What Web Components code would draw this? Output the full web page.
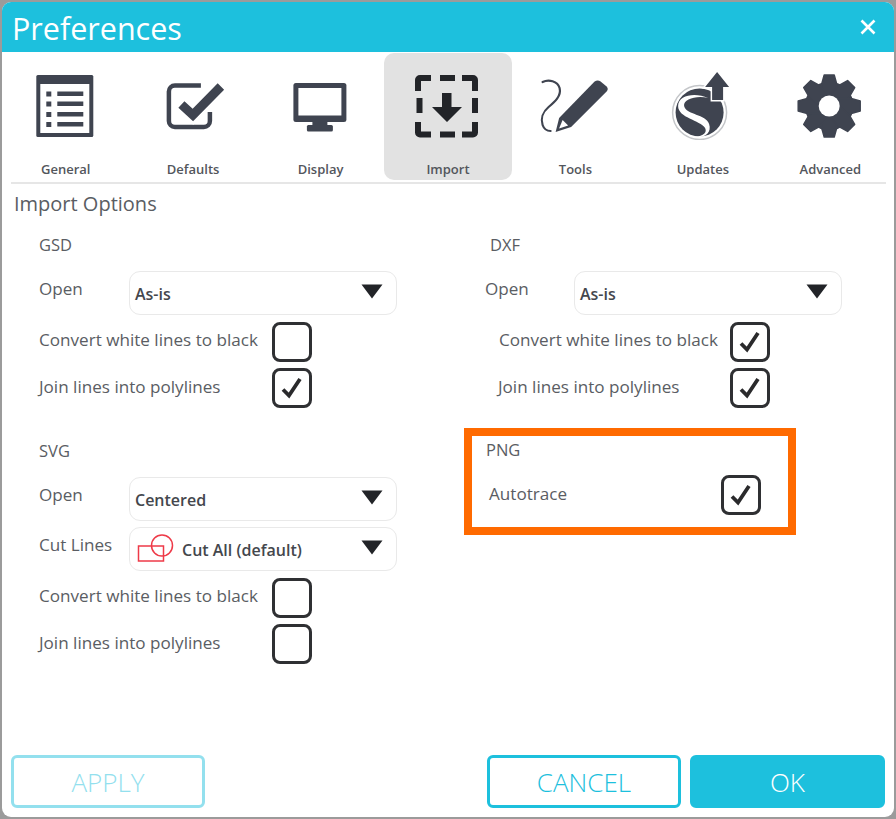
<!DOCTYPE html>
<html>
<head>
<meta charset="utf-8">
<title>Preferences</title>
<style>
  html, body { margin: 0; height: 100%; }
  body { background: #9b9b9b; padding: 2px 2px 2px 2px; box-sizing: border-box; font-family: "Open Sans", "Liberation Sans", sans-serif; color: #555; overflow: hidden; }
</style>
</head>
<body>
<pref-window heading="Preferences">
  <pref-tab slot="tabs" label="General">
    <svg viewBox="25.7 70 80 70" width="80" height="70"><rect x="36" y="75" width="57" height="62" rx="1.5" fill="#3f4450"/><rect x="40" y="84" width="49" height="49" fill="#fff"/><g fill="#3f4450"><rect x="46" y="91.500" width="5" height="5"/><rect x="46" y="101.500" width="5" height="5"/><rect x="46" y="112" width="5" height="5"/><rect x="46" y="122" width="5" height="5"/><rect x="57" y="91.500" width="26" height="4.500"/><rect x="57" y="101.500" width="26" height="4.500"/><rect x="57" y="112" width="26" height="4.500"/><rect x="57" y="122" width="26" height="4.500"/></g></svg>
  </pref-tab>
  <pref-tab slot="tabs" label="Defaults">
    <svg viewBox="153.100 70 80 70" width="80" height="70"><path d="M201 85.500H175a6 6 0 0 0-6 6V121a6 6 0 0 0 6 6h29a6 6 0 0 0 6-6v-9" fill="none" stroke="#3f4450" stroke-width="4.500"/><path d="M181.500 104.500L193 115L221 86.500" fill="none" stroke="#fff" stroke-width="14"/><path d="M181.500 104.500L193 115L221 86.500" fill="none" stroke="#3f4450" stroke-width="9"/></svg>
  </pref-tab>
  <pref-tab slot="tabs" label="Display">
    <svg viewBox="280.600 70 80 70" width="80" height="70"><rect x="293" y="83" width="53" height="39" rx="2.500" fill="#3f4450"/><rect x="298" y="88" width="43" height="27.500" fill="#fff"/><rect x="312" y="121" width="15" height="6" fill="#3f4450"/><rect x="306.500" y="125" width="26" height="6.500" rx="1.500" fill="#3f4450"/></svg>
  </pref-tab>
  <pref-tab slot="tabs" label="Import" active>
    <svg viewBox="408 70 80 70" width="80" height="70"><g fill="none" stroke="#222428" stroke-width="6"><path d="M431 78h-11a2 2 0 0 0-2 2v11"/><path d="M462 78h11a2 2 0 0 1 2 2v11"/><path d="M431 134.500h-11a2 2 0 0 1-2-2v-10.500"/><path d="M462 134.500h11a2 2 0 0 0 2-2v-10.500"/><path d="M440 78h15"/><path d="M440 134.500h15"/><path d="M419.500 98v15"/><path d="M475 98v15"/></g><path d="M442 93h9.500v14H462L447 122L432 107h10z" fill="#222428"/></svg>
  </pref-tab>
  <pref-tab slot="tabs" label="Tools">
    <svg viewBox="535.400 70 80 70" width="80" height="70"><path d="M543 82c6-3 15-1 17 6c2 8-5 14-11 19c-6 5-8 12-6 18c1 3 4 6 8 6" fill="none" stroke="#3f4450" stroke-width="2.200" stroke-linecap="round"/><path d="M595 81.500c2-1.500 4-1.500 6 0l6 5c1.500 1.500 1.500 3.500 0 5L571.500 127L556 132L559.500 118z" fill="#3f4450"/><path d="M563 120L568.500 125.500L559.500 128.500z" fill="#fff"/></svg>
  </pref-tab>
  <pref-tab slot="tabs" label="Updates">
    <svg viewBox="662.900 70 80 70" width="80" height="70"><circle cx="699.500" cy="112.500" r="27" fill="none" stroke="#c4c6c9" stroke-width="1.500"/><circle cx="699.500" cy="112.500" r="24" fill="#3f4450"/><path d="M708 98C695 92 678 95 678 106C678 118 700 120 705 128C708 134 700 137 692 137C704 139 712 133 709 124C706 114 686 115 684 106C683 99 697 95 708 98Z" fill="#fff"/><path d="M717 72L729 87H723V100H712V87H705z" fill="#3f4450" stroke="#fff" stroke-width="3" paint-order="stroke"/></svg>
  </pref-tab>
  <pref-tab slot="tabs" label="Advanced">
    <svg viewBox="790.300 70 80 70" width="80" height="70"><g fill="#3f4450" stroke="#3f4450" stroke-width="1.500" stroke-linejoin="round" transform="translate(829.500 106)"><circle r="23.500"/><path id="tooth" d="M-7.500-22L-5-31H5L7.500-22V22L5 31H-5L-7.500 22z"/><path d="M-7.500-22L-5-31H5L7.500-22V22L5 31H-5L-7.500 22z" transform="rotate(45)"/><path d="M-7.500-22L-5-31H5L7.500-22V22L5 31H-5L-7.500 22z" transform="rotate(90)"/><path d="M-7.500-22L-5-31H5L7.500-22V22L5 31H-5L-7.500 22z" transform="rotate(135)"/><circle r="10.500" fill="#fff" stroke="none"/></g></svg>
  </pref-tab>

  <pref-column>
    <pref-group heading="GSD">
      <pref-row label="Open" width="90" kind="select"><pref-select value="As-is"></pref-select></pref-row>
      <pref-row label="Convert white lines to black" width="233" kind="check"><pref-check></pref-check></pref-row>
      <pref-row label="Join lines into polylines" width="233" kind="check"><pref-check checked></pref-check></pref-row>
    </pref-group>
    <pref-group heading="SVG" style="margin-top:30.500px">
      <pref-row label="Open" width="90" kind="select"><pref-select value="Centered"></pref-select></pref-row>
      <pref-row label="Cut Lines" width="90" kind="select">
        <pref-select value="Cut All (default)">
          <svg slot="icon" width="40" height="30" viewBox="0 0 40 30"><rect x="1.500" y="12" width="25" height="15" fill="none" stroke="#ee3a48" stroke-width="1.500"/><circle cx="25" cy="11.500" r="10.500" fill="none" stroke="#ee3a48" stroke-width="1.500"/></svg>
        </pref-select>
      </pref-row>
      <pref-row label="Convert white lines to black" width="233" kind="check"><pref-check></pref-check></pref-row>
      <pref-row label="Join lines into polylines" width="233" kind="check"><pref-check></pref-check></pref-row>
    </pref-group>
  </pref-column>

  <pref-column>
    <pref-group heading="DXF" style="--title-indent:26px">
      <pref-row label="Open" width="89" kind="select" style="padding-left:21px"><pref-select value="As-is"></pref-select></pref-row>
      <pref-row label="Convert white lines to black" width="231" kind="check" style="padding-left:35px"><pref-check checked></pref-check></pref-row>
      <pref-row label="Join lines into polylines" width="232" kind="check" style="padding-left:34px"><pref-check checked></pref-check></pref-row>
    </pref-group>
    <pref-highlight style="margin-top:20px">
      <pref-group heading="PNG" style="--title-indent:14px;--title-gap:13px">
        <pref-row label="Autotrace" width="232" kind="check" style="padding-left:17px"><pref-check checked></pref-check></pref-row>
      </pref-group>
    </pref-highlight>
  </pref-column>

  <pref-button slot="actions" kind="disabled" style="margin-right:282px">APPLY</pref-button>
  <pref-button slot="actions" kind="outline" style="margin-right:9px">CANCEL</pref-button>
  <pref-button slot="actions" kind="primary">OK</pref-button>
</pref-window>

<script>
class PrefElement extends HTMLElement {
  constructor(template) {
    super()
    const _template = document.createElement('template')
    _template.innerHTML = template
    this.attachShadow({ mode: 'open' })
    this.shadowRoot.appendChild(_template.content.cloneNode(true))
  }
}

class PrefWindow extends PrefElement {
  constructor() {
    super(`
      <style>
      :host { display: flex; flex-direction: column; height: 815px; background: #fff; border-radius: 9px; overflow: hidden; }
      header { display: flex; justify-content: space-between; height: 50px; background: #1dc0dd; color: #fff; flex: none; }
      h1 { margin: 0; padding-left: 10px; font-size: 30.500px; font-weight: 400; line-height: 52px; }
      svg { margin: 17px 18px 0 0; }
      .tabs { display: grid; grid-template-columns: repeat(7, 1fr); margin-top: 1px; height: 127px; flex: none; }
      hr { margin: 2px 8px 0 9px; border: 0; height: 1.500px; background: #e6e6e6; flex: none; }
      h2 { margin: 7px 0 0 12px; font-size: 20px; font-weight: 400; line-height: 26px; color: #5a5d63; flex: none; }
      .body { display: grid; grid-template-columns: 425px 1fr; padding: 16.500px 0 0 37px; flex: none; }
      .actions { display: flex; margin-top: auto; padding: 0 9px 9px; }
      </style>
      <header><h1></h1><svg width="16" height="16" viewBox="0 0 16 16"><path d="M1.500 1.500L14.500 14.500M14.500 1.500L1.500 14.500" stroke="#fff" stroke-width="2.600"/></svg></header>
      <div class="tabs"><slot name="tabs"></slot></div>
      <hr>
      <h2>Import Options</h2>
      <div class="body"><slot></slot></div>
      <div class="actions"><slot name="actions"></slot></div>
    `)
  }
  connectedCallback() {
    this.shadowRoot.querySelector('h1').textContent = this.getAttribute('heading')
  }
}

class PrefTab extends PrefElement {
  constructor() {
    super(`
      <style>
      :host { display: flex; flex-direction: column; align-items: center; border-radius: 10px; padding-top: 17px; box-sizing: border-box; height: 127px; }
      :host([active]) { background: #e2e2e2; }
      ::slotted(svg) { display: block; flex: none; }
      span { margin-top: 20px; font-size: 13px; font-weight: 600; line-height: 18px; color: #53565c; }
      </style>
      <slot></slot><span></span>
    `)
  }
  connectedCallback() {
    this.shadowRoot.querySelector('span').textContent = this.getAttribute('label')
  }
}

class PrefColumn extends PrefElement {
  constructor() {
    super(`<style>:host { display: flex; flex-direction: column; align-items: flex-start; }</style><slot></slot>`)
  }
}

class PrefGroup extends PrefElement {
  constructor() {
    super(`
      <style>
      :host { display: flex; flex-direction: column; gap: 6.500px; }
      h3 { margin: 0 0 calc(var(--title-gap, 14px) - 6.500px); padding-left: var(--title-indent, 0); font-size: 16.500px; font-weight: 400; line-height: 24px; color: #5a5d63; }
      </style>
      <h3></h3><slot></slot>
    `)
  }
  connectedCallback() {
    this.shadowRoot.querySelector('h3').textContent = this.getAttribute('heading')
  }
}

class PrefRow extends PrefElement {
  constructor() {
    super(`
      <style>
      :host { display: flex; align-items: center; }
      span { flex: none; font-size: 17.100px; line-height: 24px; color: #5a5d63; white-space: nowrap; }
      :host([kind="select"]) span { padding-bottom: 8px; }
      :host([kind="check"]) span { padding-bottom: 3px; }
      </style>
      <span></span><slot></slot>
    `)
  }
  connectedCallback() {
    const label = this.shadowRoot.querySelector('span')
    label.textContent = this.getAttribute('label')
    label.style.width = this.getAttribute('width') + 'px'
  }
}

class PrefSelect extends PrefElement {
  constructor() {
    super(`
      <style>
      :host { display: flex; align-items: center; box-sizing: border-box; width: 268px; height: 44px; padding: 0 13px 0 5px; border: 1.500px solid #e9e9e9; border-radius: 11px; background: #fff; }
      ::slotted(svg) { flex: none; margin: 0 5px 0 2px; }
      span { flex: 1; padding-top: 2px; font-size: 16px; font-weight: 600; color: #44474d; white-space: nowrap; }
      svg { flex: none; margin-bottom: 3px; }
      </style>
      <slot name="icon"></slot><span></span>
      <svg width="22" height="15" viewBox="0 0 22 15"><path d="M0.500 0.500H21.500L11 14.500z" fill="#222428"/></svg>
    `)
  }
  connectedCallback() {
    this.shadowRoot.querySelector('span').textContent = this.getAttribute('value')
  }
}

class PrefCheck extends PrefElement {
  constructor() {
    super(`
      <style>
      :host { display: block; box-sizing: border-box; width: 40px; height: 40px; border: 3px solid #2f3033; border-radius: 8px; flex: none; }
      svg { display: none; }
      :host([checked]) svg { display: block; }
      </style>
      <svg width="34" height="34" viewBox="0 0 34 34"><path d="M8 18.500L14 24.500L25 8" fill="none" stroke="#2a2a2c" stroke-width="3.800"/></svg>
    `)
  }
}

class PrefHighlight extends PrefElement {
  constructor() {
    super(`
      <style>
      :host { display: block; box-sizing: border-box; width: 332px; height: 107px; padding-top: 2px; border: 8px solid #ff6a00; }
      </style>
      <slot></slot>
    `)
  }
}

class PrefButton extends PrefElement {
  constructor() {
    super(`
      <style>
      :host { display: flex; align-items: center; justify-content: center; box-sizing: border-box; width: 194px; height: 53px; border: 3px solid #1dc0dd; border-radius: 6px; font-size: 26px; font-weight: 300; color: #1dc0dd; }
      :host([kind="disabled"]) { border-color: #93e0ee; color: #93e0ee; }
      :host([kind="primary"]) { width: 195px; background: #1dc0dd; color: #fff; }
      </style>
      <slot></slot>
    `)
  }
}

window.customElements.define('pref-window', PrefWindow)
window.customElements.define('pref-tab', PrefTab)
window.customElements.define('pref-column', PrefColumn)
window.customElements.define('pref-group', PrefGroup)
window.customElements.define('pref-row', PrefRow)
window.customElements.define('pref-select', PrefSelect)
window.customElements.define('pref-check', PrefCheck)
window.customElements.define('pref-highlight', PrefHighlight)
window.customElements.define('pref-button', PrefButton)
</script>
</body>
</html>
